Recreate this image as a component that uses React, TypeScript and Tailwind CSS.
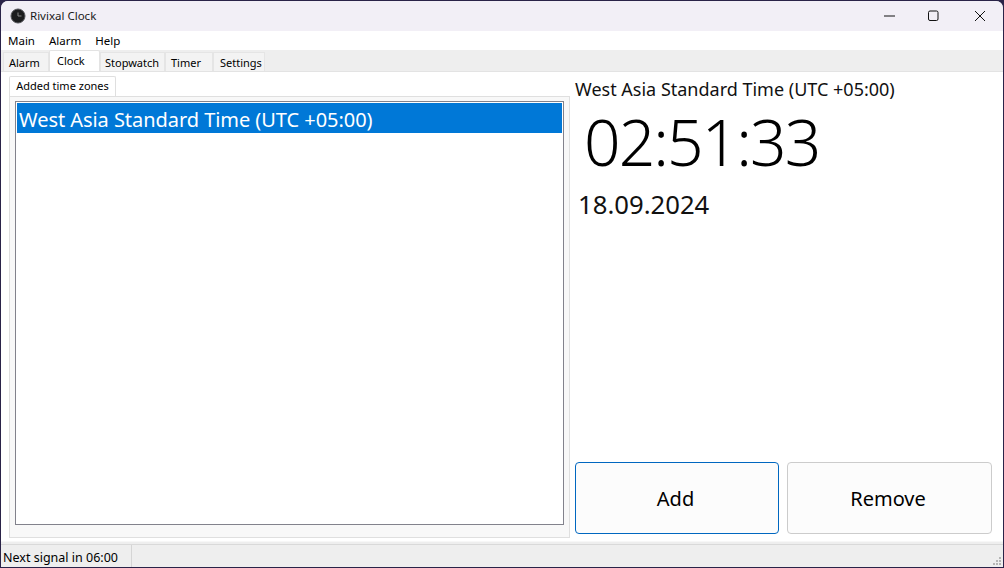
const font = "font-['Noto_Sans','Open_Sans',sans-serif]";

function ClockIcon() {
  return (
    <svg width="16" height="16" viewBox="0 0 16 16">
      <circle cx="8" cy="8" r="7" fill="#1c1c1e" stroke="#55555a" strokeWidth="1" />
      <path d="M8 4.5V8H11.5" fill="none" stroke="#8a8a8a" strokeWidth="1" />
    </svg>
  );
}

function MainTab({ label, active, w }: { label: string; active?: boolean; w: string }) {
  if (active) {
    return (
      <div className={`${w} h-[21px] -mt-[1px] bg-white border border-b-0 border-[#e3e3e3] rounded-t-[2px] text-[11px] leading-[19px] text-black relative z-10 whitespace-nowrap`}>
        {label}
      </div>
    );
  }
  return (
    <div className={`${w} h-[19px] mt-[1px] bg-[#f3f3f3] border border-b-0 border-[#e5e5e5] text-[11px] leading-[20px] text-black whitespace-nowrap`}>
      {label}
    </div>
  );
}

export default function App() {
  return (
    <div className={`w-[1004px] h-[568px] overflow-hidden bg-[#2a2348] ${font}`}>
      <div className="w-full h-full p-[1px]">
        <div className="w-full h-full rounded-t-[7px] overflow-hidden flex flex-col bg-[#eeeeee]">
          {/* Title bar */}
          <div className="h-[30px] bg-[#f2eff6] flex items-center shrink-0">
            <div className="ml-[9px]"><ClockIcon /></div>
            <span className="ml-[4px] text-[11.5px] text-[#1a1a1a]">Rivixal Clock</span>
            <div className="ml-auto flex items-center">
              <svg width="46" height="30" viewBox="0 0 46 30"><path d="M19 15H30" stroke="#111" strokeWidth="1" /></svg>
              <svg width="46" height="30" viewBox="0 0 46 30"><rect x="17.5" y="10" width="9.5" height="9.5" rx="1.5" fill="none" stroke="#111" strokeWidth="1" /></svg>
              <svg width="46" height="30" viewBox="0 0 46 30"><path d="M18 10L28 20M28 10L18 20" stroke="#111" strokeWidth="1" /></svg>
            </div>
          </div>
          {/* Menu */}
          <div className="h-[19px] bg-white flex items-center shrink-0 pl-[7px] gap-[14px] text-[11.5px] text-black">
            <span>Main</span>
            <span>Alarm</span>
            <span>Help</span>
          </div>
          {/* Tabs */}
          <div className="h-[21px] bg-[#eeeeee] flex items-start shrink-0 pl-[2px] pt-[1px]">
            <MainTab label="Alarm" w="w-[46px] pl-[5px]" />
            <MainTab label="Clock" active w="w-[51px] pl-[7px]" />
            <MainTab label="Stopwatch" w="w-[65px] pl-[4px]" />
            <MainTab label="Timer" w="w-[48px] pl-[5px]" />
            <MainTab label="Settings" w="w-[52px] pl-[6px]" />
          </div>
          {/* Tab page */}
          <div className="flex-1 min-h-0 bg-white border-t border-[#e3e3e3] flex pl-[8px] pr-[11px] pb-[3px] mb-[3px] shadow-[0_1px_0_#f7f7f7]">
            <div className="w-[561px] flex flex-col shrink-0">
              <div className="h-[24px] flex items-end pt-[4px]">
                <div className="w-[107px] h-[20px] bg-white border border-b-0 border-[#dfdfdf] rounded-t-[2px] text-center text-[11px] leading-[18px] text-black">
                  Added time zones
                </div>
              </div>
              <div className="flex-1 bg-[#f8f8f8] border border-[#dfdfdf] pt-[4px] px-[5px] pb-[12px] flex">
                <div className="flex-1 bg-white border border-[#82828c] p-[1px]">
                  <div className="h-[30px] bg-[#0078d7] text-white text-[20px] leading-[33px] pl-[2px] whitespace-nowrap tracking-[-0.05px]">
                    West Asia Standard Time (UTC +05:00)
                  </div>
                </div>
              </div>
            </div>
            <div className="flex-1 flex flex-col pl-[5px] pt-[4px]">
              <div className="text-[18px] leading-[26px] text-[#111] whitespace-nowrap">West Asia Standard Time (UTC +05:00)</div>
              <div className="text-[64px] leading-[80px] pl-[9px] text-black font-light whitespace-nowrap tracking-[-1.9px]">02:51:33</div>
              <div className="text-[25.7px] leading-[36px] pl-[3px] mt-[5px] text-[#111]">18.09.2024</div>
              <div className="mt-auto flex gap-[8px] pb-[4px]">
                <button className="w-[204px] h-[72px] bg-[#fcfcfc] border border-[#0067c0] rounded-[4px] text-[20px] pr-[3px] pt-[2px] text-black">Add</button>
                <button className="w-[205px] h-[72px] bg-[#fcfcfc] border border-[#cccccc] rounded-[4px] text-[20px] pr-[3px] pt-[2px] text-black">Remove</button>
              </div>
            </div>
          </div>
          {/* Status bar */}
          <div className="h-[23px] bg-[#eeeeee] border-t border-[#d9d9d9] flex items-center shrink-0 relative">
            <div className="h-[22px] w-[131px] border-r border-[#d5d5d5] pl-[2px] text-[12.5px] leading-[26px] text-black whitespace-nowrap">Next signal in 06:00</div>
            <svg className="absolute right-[1px] bottom-[1px]" width="10" height="10" viewBox="0 0 10 10" fill="#b5b5b5">
              <rect x="7" y="1" width="2" height="2" /><rect x="4" y="4" width="2" height="2" /><rect x="7" y="4" width="2" height="2" />
              <rect x="1" y="7" width="2" height="2" /><rect x="4" y="7" width="2" height="2" /><rect x="7" y="7" width="2" height="2" />
            </svg>
          </div>
        </div>
      </div>
    </div>
  );
}
